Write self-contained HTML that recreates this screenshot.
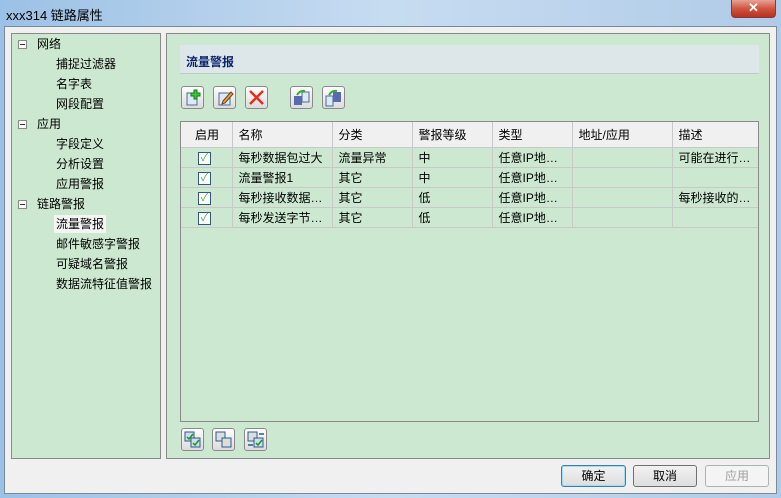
<!DOCTYPE html>
<html><head><meta charset="utf-8"><style>
*{margin:0;padding:0;box-sizing:border-box}
body{width:781px;height:498px;overflow:hidden;font-family:"Liberation Sans","Noto Sans CJK SC",sans-serif;font-size:12px;color:#000;position:relative;background:linear-gradient(90deg,#9cc1e6,#c7dcf1 50%,#b0cbe8)}
.abs{position:absolute}
.title{left:6px;top:5px;font-size:13px;color:#000}
.close{left:731px;top:0;width:45px;height:18px;border:1px solid #8a3a30;border-top:none;border-radius:0 0 4px 4px;background:linear-gradient(#e8a294,#d0553f 50%,#b73220);color:#fff;text-align:center;font-weight:bold;font-size:13px;line-height:16px}
.win{left:4px;top:26px;width:773px;height:468px;background:#f0f0f0;border:1px solid #7a8a99}
.panel{background:#cde8d1;border:1px solid #8a8a8a}
.tree div{position:absolute;white-space:nowrap;height:18px;line-height:18px}
.tree div.pm{width:9px;height:9px;border:1px solid #8a8a8a;background:#fff;line-height:0}
.pm::after{content:"";position:absolute;left:1px;top:3px;width:5px;height:1px;background:#333}
.hdr{left:180px;top:45px;width:579px;height:29px;background:#dde7ea;border-bottom:1px solid #c0c8cc;font-weight:bold;color:#0a246a;padding:8px 6px;font-size:12px}
.btn{width:23px;height:23px;border:1px solid #8a8a8a;border-radius:3px;background:linear-gradient(#fdfdfd,#dcdcdc)}
table{border-collapse:collapse;table-layout:fixed}
td,th{height:20px;font-weight:normal;text-align:left;padding-left:6px;border-right:1px solid #c8c8c8;border-bottom:1px solid #c8c8c8;white-space:nowrap;overflow:hidden}
th{height:25px;background:#f0f0f0;border-right:1px solid #c8c8c8}
.cb{display:inline-block;width:13px;height:13px;border:1px solid #33597a;background:#fff;color:#4caf50;font-size:11px;line-height:11px;text-align:center}
.dbtn{height:22px;border:1px solid #707070;border-radius:3px;background:linear-gradient(#f2f2f2,#dedede);text-align:center;line-height:20px}
</style></head><body>
<div class="abs title">xxx314 链路属性</div>
<div class="abs close">✕</div>
<div class="abs win"></div>
<div class="abs panel" style="left:11px;top:33px;width:150px;height:426px"></div>
<div class="tree">
<div class="pm" style="left:18px;top:40px"></div><div style="left:37px;top:35px">网络</div>
<div style="left:56px;top:55px">捕捉过滤器</div>
<div style="left:56px;top:75px">名字表</div>
<div style="left:56px;top:95px">网段配置</div>
<div class="pm" style="left:18px;top:120px"></div><div style="left:37px;top:115px">应用</div>
<div style="left:56px;top:135px">字段定义</div>
<div style="left:56px;top:155px">分析设置</div>
<div style="left:56px;top:175px">应用警报</div>
<div class="pm" style="left:18px;top:200px"></div><div style="left:37px;top:195px">链路警报</div>
<div style="left:54px;top:215px;background:#f4f4f4;padding:0 2px">流量警报</div>
<div style="left:56px;top:235px">邮件敏感字警报</div>
<div style="left:56px;top:255px">可疑域名警报</div>
<div style="left:56px;top:275px">数据流特征值警报</div>
</div>
<div class="abs panel" style="left:166px;top:33px;width:604px;height:426px"></div>
<div class="abs hdr">流量警报</div>
<div class="abs btn" style="left:181px;top:86px"><svg width="21" height="21"><rect x="5" y="6" width="10" height="12" fill="#dfe8f5" stroke="#4a6a9a"/><path d="M12 3h3v3h3v3h-3v3h-3v-3h-3v-3h3z" fill="#3c3" stroke="#1a7a1a"/></svg></div>
<div class="abs btn" style="left:213px;top:86px"><svg width="21" height="21"><rect x="5" y="6" width="11" height="12" fill="#dfe8f5" stroke="#4a6a9a"/><path d="M9 14l8-9 2 2-8 9-3 1z" fill="#e8a040" stroke="#704010"/></svg></div>
<div class="abs btn" style="left:245px;top:86px"><svg width="21" height="21"><path d="M4 4l13 13M17 4L4 17" stroke="#e03020" stroke-width="2.5"/></svg></div>
<div class="abs btn" style="left:290px;top:86px"><svg width="21" height="21"><rect x="3" y="9" width="8" height="9" fill="#5a6ab0"/><rect x="11" y="5" width="7" height="10" fill="#dfe8f5" stroke="#4a6a9a"/><path d="M6 8q3-5 8-4" stroke="#3a3" stroke-width="2" fill="none"/></svg></div>
<div class="abs btn" style="left:322px;top:86px"><svg width="21" height="21"><rect x="10" y="5" width="8" height="10" fill="#5a6ab0"/><rect x="3" y="9" width="7" height="10" fill="#dfe8f5" stroke="#4a6a9a"/><path d="M6 8q3-5 8-4" stroke="#3a3" stroke-width="2" fill="none"/></svg></div>
<div class="abs" style="left:180px;top:121px;width:579px;height:301px;border:1px solid #8a8a8a;background:#cde8d1;overflow:hidden">
<table style="width:578px">
<colgroup><col style="width:51px"><col style="width:100px"><col style="width:80px"><col style="width:80px"><col style="width:80px"><col style="width:100px"><col style="width:87px"></colgroup>
<tr><th style="padding-left:14px">启用</th><th>名称</th><th>分类</th><th>警报等级</th><th>类型</th><th>地址/应用</th><th>描述</th></tr>
<tr><td style="padding-left:17px"><span class="cb">✓</span></td><td>每秒数据包过大</td><td>流量异常</td><td>中</td><td>任意IP地…</td><td></td><td>可能在进行…</td></tr>
<tr><td style="padding-left:17px"><span class="cb">✓</span></td><td>流量警报1</td><td>其它</td><td>中</td><td>任意IP地…</td><td></td><td></td></tr>
<tr><td style="padding-left:17px"><span class="cb">✓</span></td><td>每秒接收数据…</td><td>其它</td><td>低</td><td>任意IP地…</td><td></td><td>每秒接收的…</td></tr>
<tr><td style="padding-left:17px"><span class="cb">✓</span></td><td>每秒发送字节…</td><td>其它</td><td>低</td><td>任意IP地…</td><td></td><td></td></tr>
</table></div>
<div class="abs btn" style="left:181px;top:428px"><svg width="21" height="21"><rect x="3" y="3" width="9" height="9" fill="#cde" stroke="#2a5a8a"/><rect x="9" y="9" width="9" height="9" fill="#cde" stroke="#2a5a8a"/><path d="M5 8l2 2 4-5M11 14l2 2 4-5" stroke="#1a9a1a" stroke-width="1.5" fill="none"/></svg></div>
<div class="abs btn" style="left:212px;top:428px"><svg width="21" height="21"><rect x="3" y="3" width="9" height="9" fill="#ddd" stroke="#2a5a8a"/><rect x="9" y="9" width="9" height="9" fill="#ddd" stroke="#2a5a8a"/></svg></div>
<div class="abs btn" style="left:244px;top:428px"><svg width="21" height="21"><rect x="3" y="3" width="9" height="9" fill="#ddd" stroke="#2a5a8a"/><rect x="9" y="9" width="9" height="9" fill="#cde" stroke="#2a5a8a"/><path d="M11 14l2 2 4-5" stroke="#1a9a1a" stroke-width="1.5" fill="none"/><path d="M14 5h5M3 16h5" stroke="#2a5a8a" stroke-width="1.5"/></svg></div>
<div class="abs dbtn" style="left:561px;top:465px;width:65px;border-color:#3c7fb1;box-shadow:inset 0 0 0 1px #9fdcf5">确定</div>
<div class="abs dbtn" style="left:633px;top:465px;width:64px">取消</div>
<div class="abs dbtn" style="left:705px;top:465px;width:64px;border-color:#adb2b5;background:#f4f4f4;color:#a0a0a0">应用</div>
</body></html>
